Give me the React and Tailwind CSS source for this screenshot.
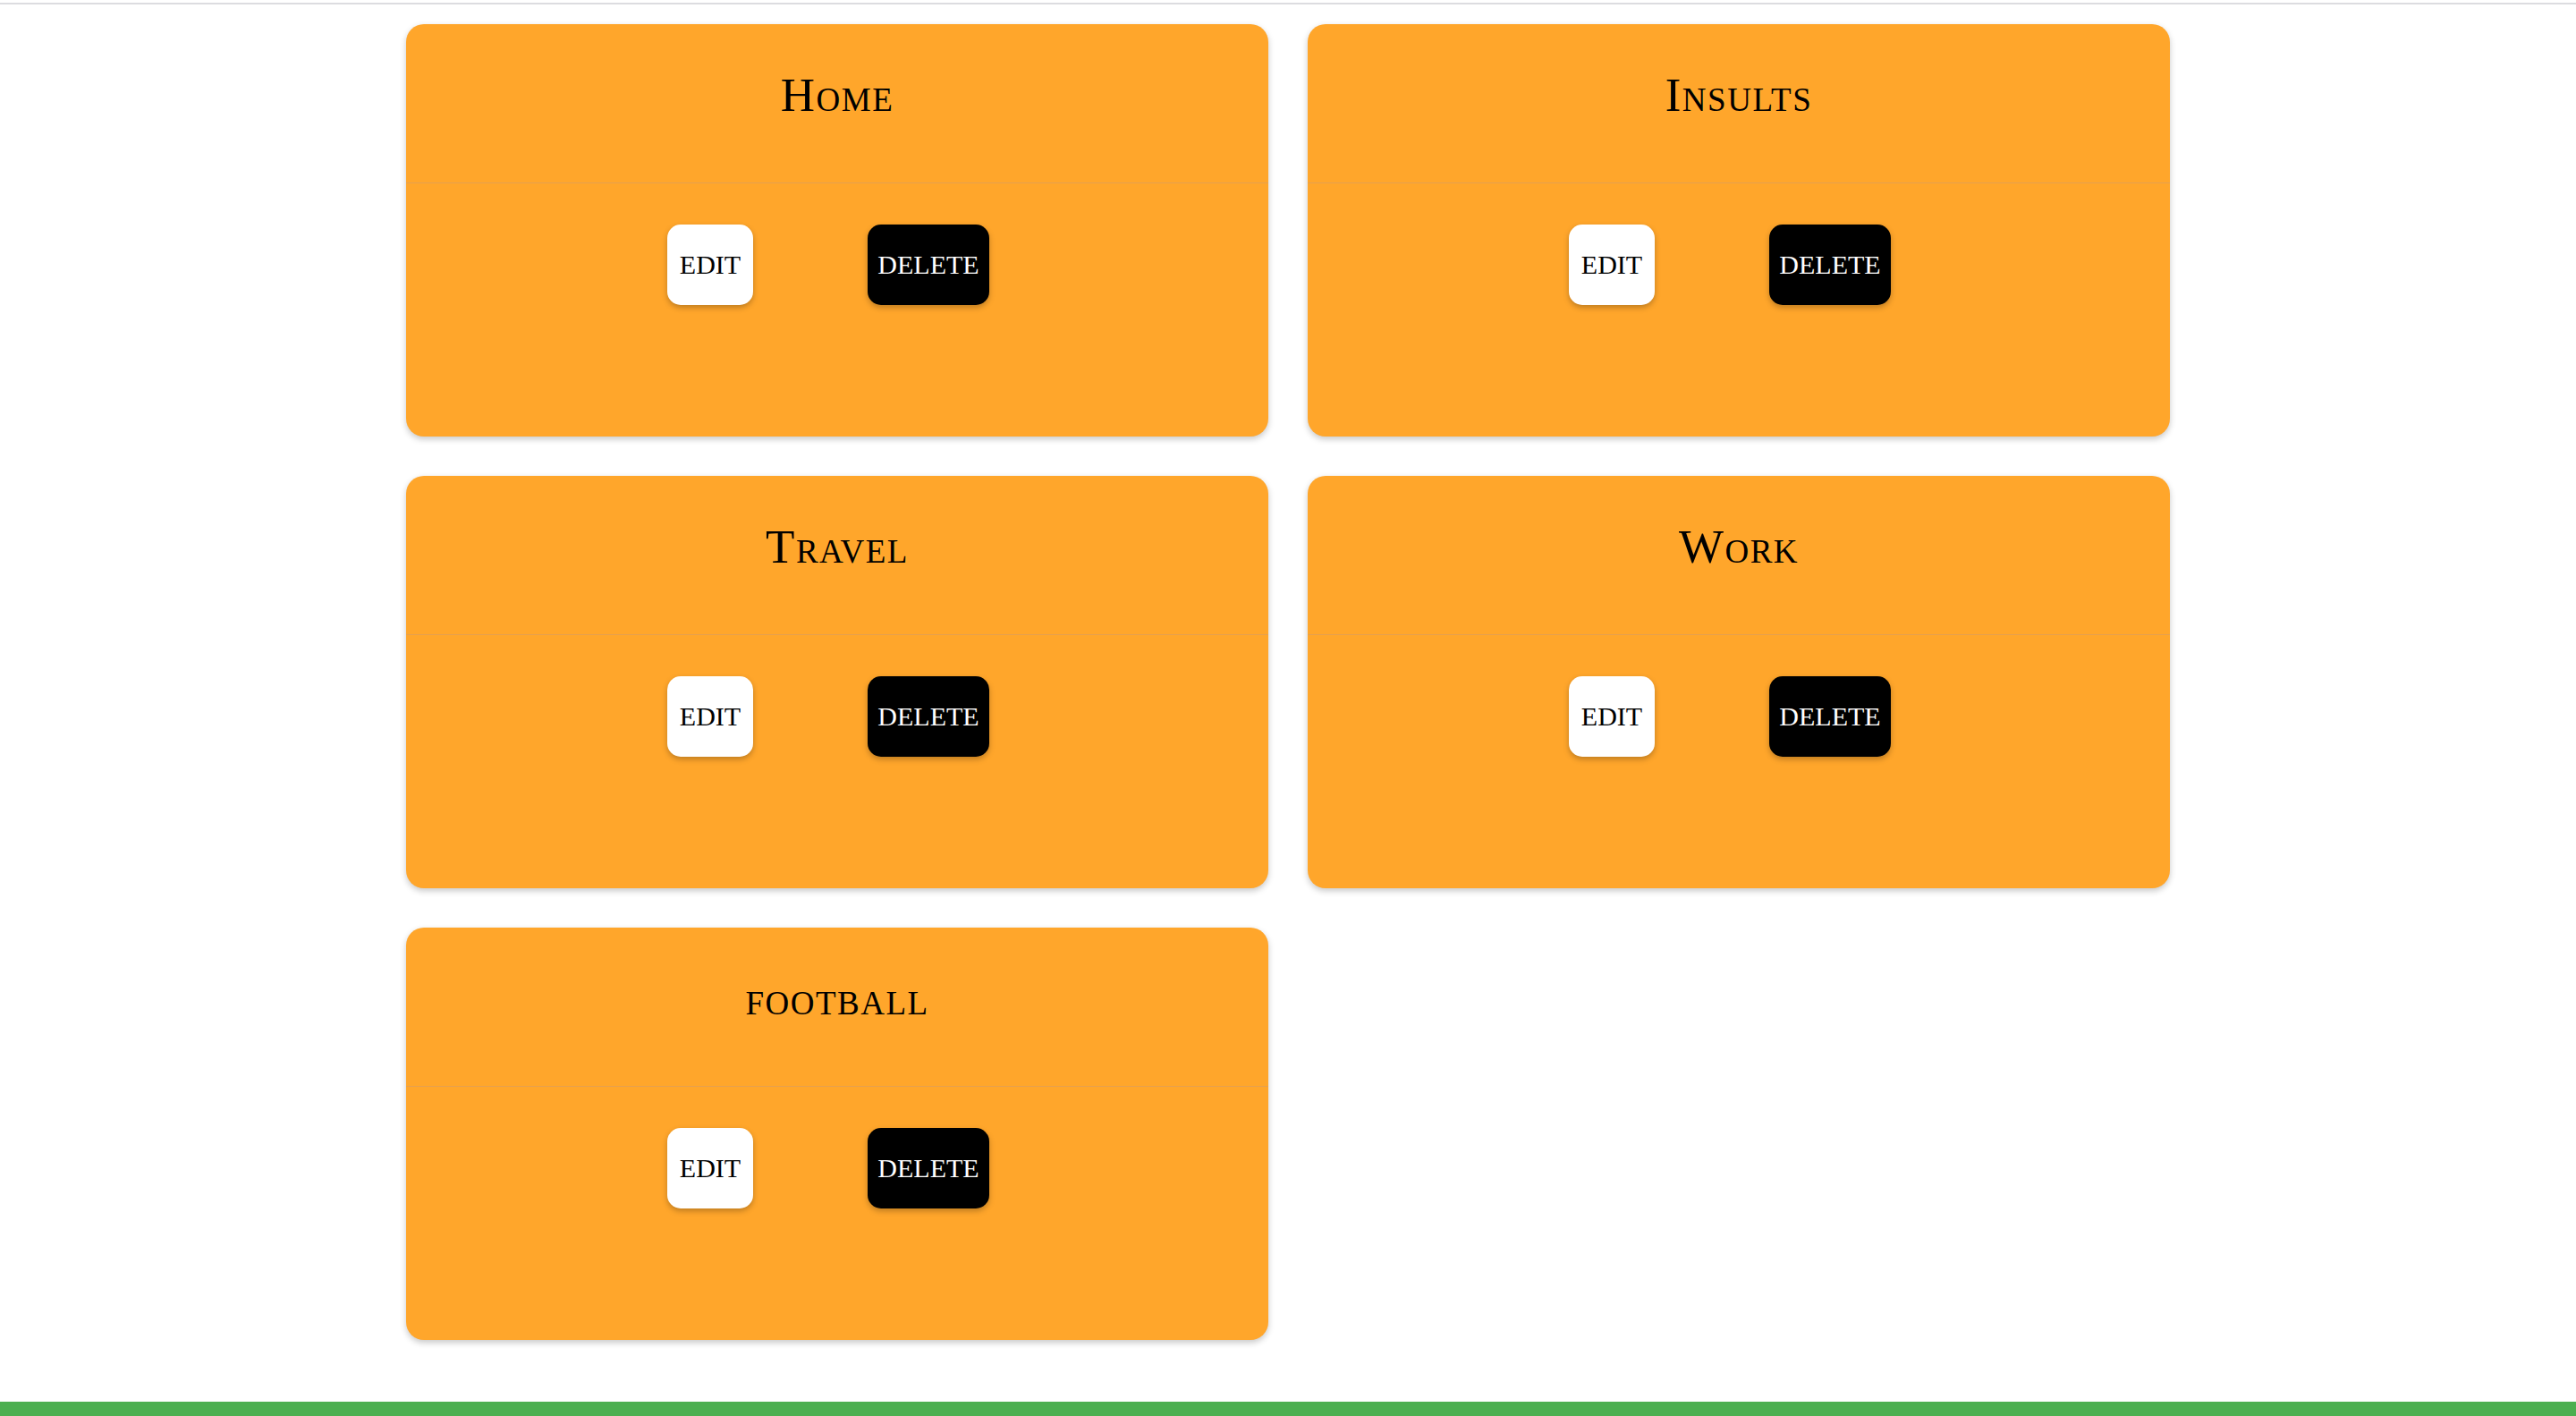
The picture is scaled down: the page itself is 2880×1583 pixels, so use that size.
import React from 'react';

const categories = ['Home', 'Insults', 'Travel', 'Work', 'football'];

const CategoryCard = ({ name }) => {
  return (
    <div className="h-[461px] rounded-[20px] bg-[#ffa62b] shadow-[0_3px_7px_rgba(0,0,0,0.22)] flex flex-col">
      {/* Header */}
      <div className="h-[178px] pt-[53px] border-b border-[#e5a04f] text-center">
        <h2 className="text-[53px] leading-[53px] tracking-[1.5px] text-black [font-variant:small-caps]">
          {name}
        </h2>
      </div>

      {/* Actions */}
      <div className="flex justify-center gap-[128px] pt-[46px] pr-[20px]">
        <button className="w-[96px] h-[90px] rounded-[15px] bg-white text-black text-[30px] leading-[30px] flex items-center justify-center shadow-[0_3px_6px_rgba(0,0,0,0.25)]">
          EDIT
        </button>
        <button className="w-[136px] h-[90px] rounded-[15px] bg-black text-white text-[30px] leading-[30px] flex items-center justify-center shadow-[0_3px_6px_rgba(0,0,0,0.25)]">
          DELETE
        </button>
      </div>
    </div>
  );
};

const App = () => {
  return (
    <div className="min-h-screen flex flex-col bg-white font-['Liberation_Serif',serif]">
      {/* Top border */}
      <div className="h-[5px] border-b-2 border-[#dcdce0]" />

      {/* Cards */}
      <main className="flex-1 pt-[22px]">
        <div className="w-[1972px] mx-auto grid grid-cols-2 gap-[44px]">
          {categories.map((c) => (
            <CategoryCard key={c} name={c} />
          ))}
        </div>
      </main>

      {/* Footer */}
      <footer className="h-[16px] bg-[#4caf50]" />
    </div>
  );
};

export default App;
